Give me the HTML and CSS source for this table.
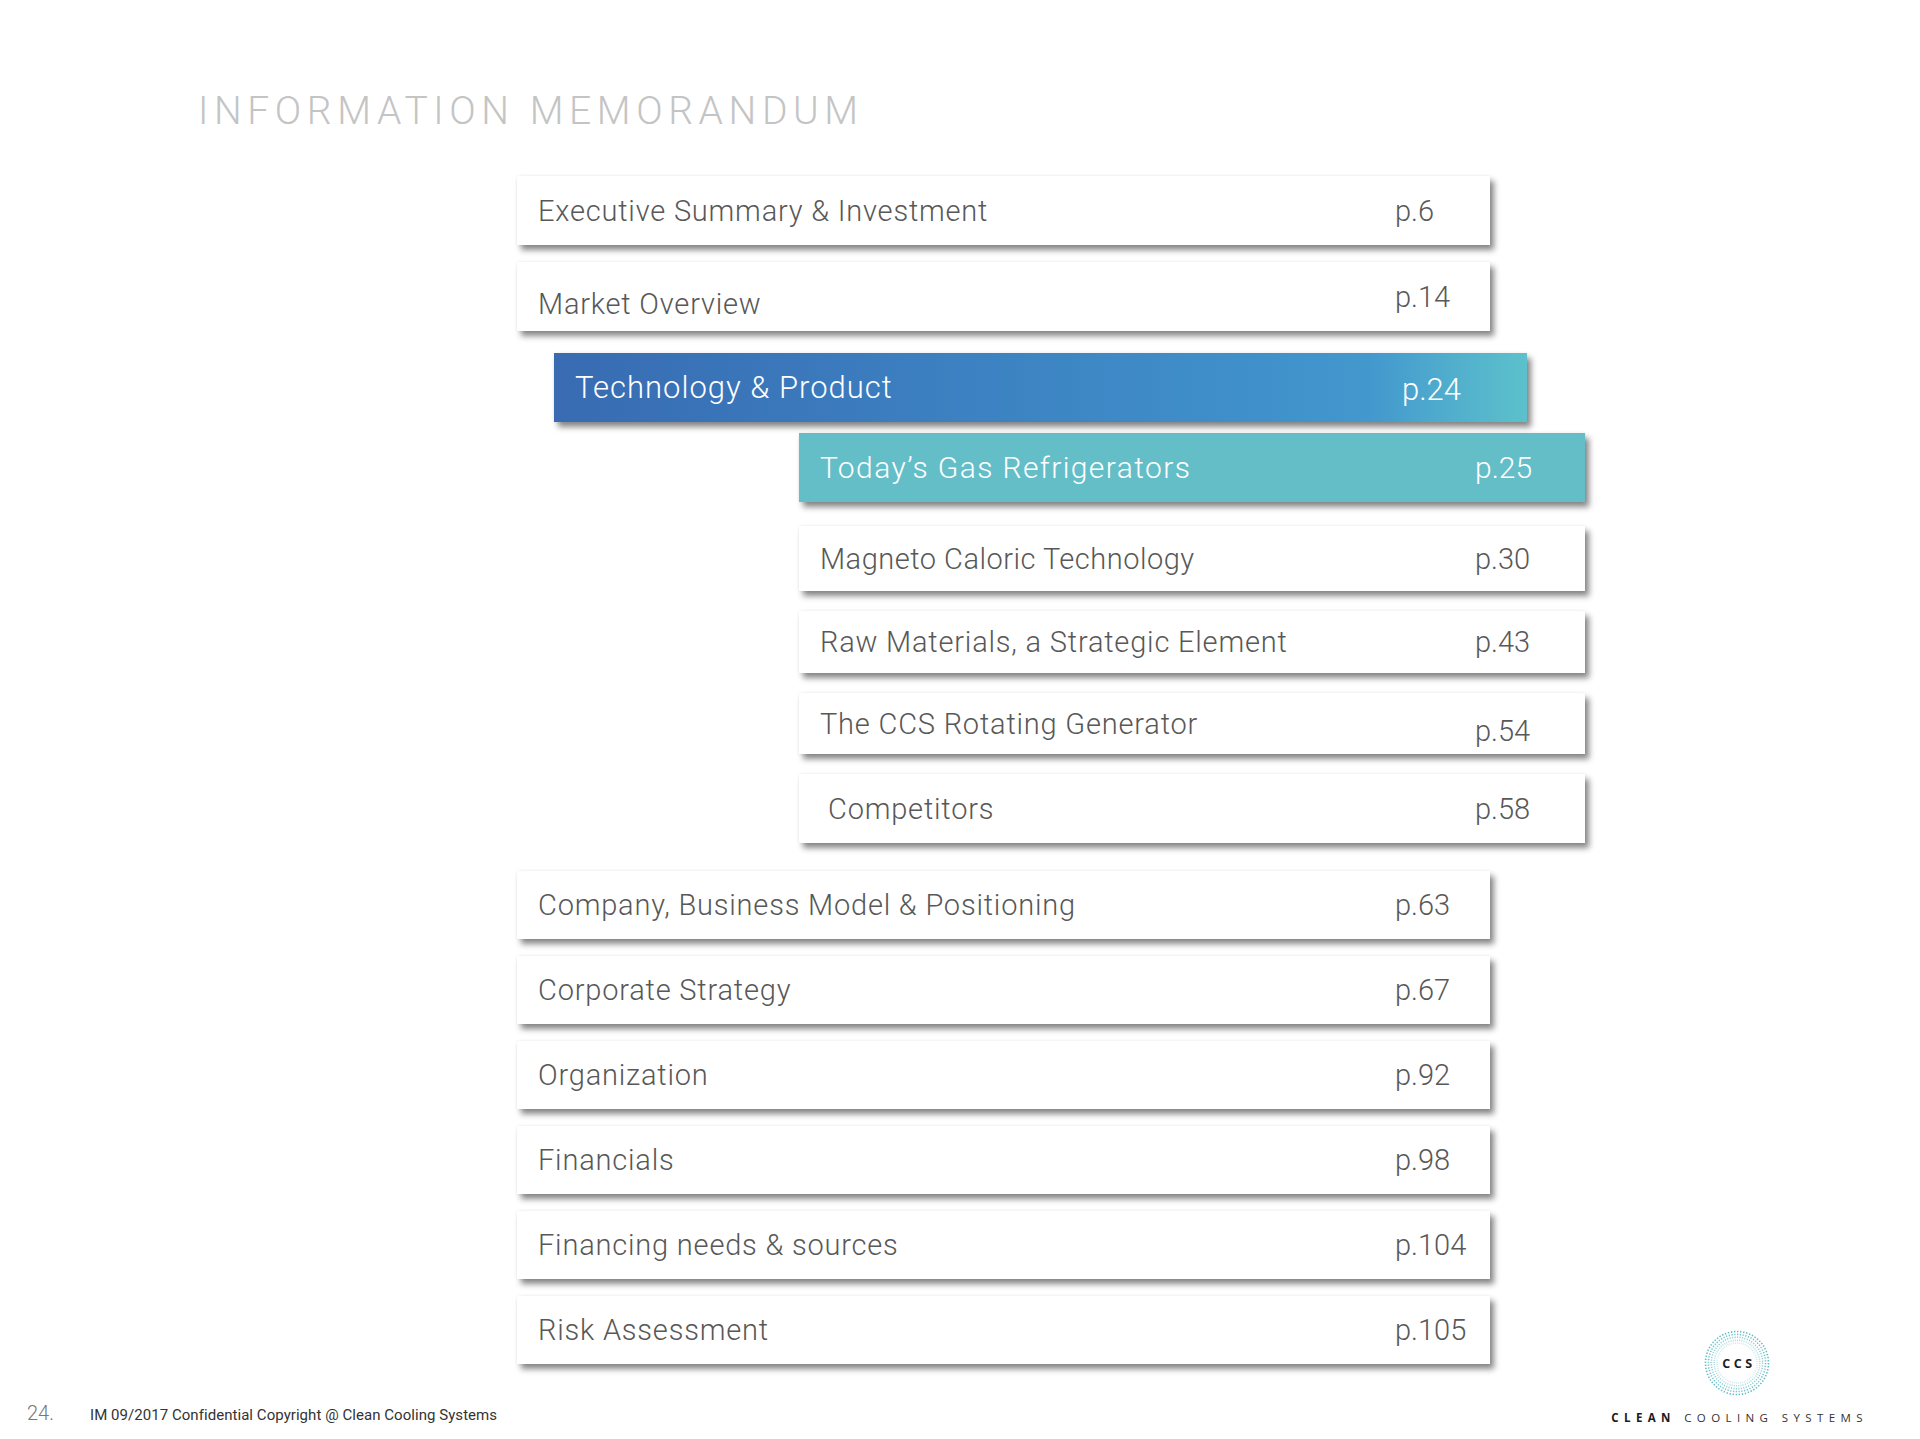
FILE: index.html
```html
<!DOCTYPE html>
<html lang="en">
<head>
<meta charset="utf-8">
<title>Information Memorandum</title>
<link rel="stylesheet" href="styles.css">
</head>
<body>
<div class="page">
  <h1 class="title">INFORMATION MEMORANDUM</h1>
  <div class="main">
    <div class="left">
      <div class="toc">
        <div class="row row--main row--tall"><span class="label">Executive Summary &amp; Investment</span><span class="num">p.6</span></div>
        <div class="row row--main row--tall"><span class="label label--low">Market Overview</span><span class="num">p.14</span></div>
        <div class="row row--tech"><span class="label">Technology &amp; Product</span><span class="num">p.24</span></div>
        <div class="sub">
          <div class="row row--sub row--today"><span class="label">Today’s Gas Refrigerators</span><span class="num">p.25</span></div>
          <div class="row row--sub row--mag"><span class="label">Magneto Caloric Technology</span><span class="num">p.30</span></div>
          <div class="row row--sub row--short"><span class="label">Raw Materials, a Strategic Element</span><span class="num">p.43</span></div>
          <div class="row row--sub row--shorter"><span class="label">The CCS Rotating Generator</span><span class="num num--low">p.54</span></div>
          <div class="row row--sub row--comp"><span class="label label--indent">Competitors</span><span class="num">p.58</span></div>
        </div>
        <div class="group">
          <div class="row row--main"><span class="label">Company, Business Model &amp; Positioning</span><span class="num">p.63</span></div>
          <div class="row row--main"><span class="label">Corporate Strategy</span><span class="num">p.67</span></div>
          <div class="row row--main"><span class="label">Organization</span><span class="num">p.92</span></div>
          <div class="row row--main"><span class="label">Financials</span><span class="num">p.98</span></div>
          <div class="row row--main"><span class="label">Financing needs &amp; sources</span><span class="num">p.104</span></div>
          <div class="row row--main row--risk"><span class="label">Risk Assessment</span><span class="num">p.105</span></div>
        </div>
      </div>
      <div class="footer">
        <span class="pageno">24.</span>
        <span class="copy">IM 09/2017 Confidential Copyright @ Clean Cooling Systems</span>
      </div>
    </div>
    <div class="brand">
      <svg class="brand-mark" width="66" height="66" viewBox="0 0 66 66" aria-hidden="true">
        <g fill="none" stroke-width="1.6" transform="rotate(-90 33 33)">
          <circle cx="33" cy="33" r="31.5" stroke="#62bcc5" pathLength="64" stroke-dasharray="0.45 0.55"/>
          <circle cx="33" cy="33" r="28.6" stroke="#74c4cc" pathLength="64" stroke-dasharray="0.45 0.55"/>
          <circle cx="33" cy="33" r="25.7" stroke="#8fcfd5" pathLength="64" stroke-dasharray="0.45 0.55"/>
          <circle cx="33" cy="33" r="22.8" stroke="#aedbdf" pathLength="64" stroke-dasharray="0.45 0.55"/>
          <circle cx="33" cy="33" r="20" stroke="#cde8ea" pathLength="64" stroke-dasharray="0.45 0.55"/>
        </g>
        <text x="35" y="37.5" text-anchor="middle" class="brand-ccs">CCS</text>
      </svg>
      <div class="brand-name"><b>CLEAN</b> COOLING SYSTEMS</div>
    </div>
  </div>
</div>
</body>
</html>
```

FILE: styles.css
```css
* { box-sizing: border-box; }

html, body {
  margin: 0;
  padding: 0;
  background: #ffffff;
}

body {
  font-family: Roboto, "Liberation Sans", sans-serif;
  color: #5a5a5a;
}

.page {
  width: 1920px;
  height: 1439px;
  overflow: hidden;
  display: flex;
  flex-direction: column;
}

.title {
  margin: 88px 0 0 198px;
  font-size: 39px;
  line-height: 46px;
  font-weight: 300;
  letter-spacing: 5.6px;
  color: #c4c4c4;
}

.main {
  display: flex;
  align-items: flex-end;
  justify-content: space-between;
  padding: 0 57px 0 27px;
}

.left {
  display: flex;
  flex-direction: column;
}

.toc {
  margin: 42px 0 0 490px;
  display: flex;
  flex-direction: column;
  gap: 17px;
}

.row {
  display: flex;
  align-items: center;
  height: 68px;
  padding-left: 21px;
  background: #ffffff;
  box-shadow: 4px 5px 6px rgba(0, 0, 0, 0.47), 0 0 3px rgba(0, 0, 0, 0.07);
  font-size: 29px;
  font-weight: 300;
  line-height: 34px;
  color: #585858;
}

.label {
  flex: 1;
  white-space: nowrap;
  letter-spacing: 0.8px;
}
.label--low { margin-top: 15px; }
.label--indent { padding-left: 8px; }

.num { white-space: nowrap; }
.num--low { margin-top: 15px; }

.row--main { width: 973px; }
.row--main .num { width: 95px; }
.row--tall { height: 69px; }

.row--tech {
  width: 973px;
  height: 69px;
  margin: 5px 0 0 37px;
  background: linear-gradient(90deg, #386bb2 0%, #3c7fc0 38%, #3f8fca 70%, #4398cd 84%, #4fabcd 91%, #5cc1cb 100%);
  color: #ffffff;
  font-size: 31px;
  font-weight: 300;
}
.row--tech .label { letter-spacing: 1px; }
.row--tech .num { width: 125px; padding-top: 4px; }

.sub {
  display: flex;
  flex-direction: column;
  gap: 20px;
  margin: -6px 0 0 282px;
}

.row--sub { width: 786px; }
.row--sub .num { width: 110px; }

.row--today {
  height: 69px;
  background: #64bec8;
  color: #ffffff;
  font-size: 30px;
  font-weight: 300;
}
.row--today .label { letter-spacing: 1.4px; }

.row--mag { height: 65px; margin-top: 4px; }
.row--mag .label { letter-spacing: 0.5px; }
.row--short { height: 62px; }
.row--shorter { height: 61px; }
.row--comp { height: 69px; }

.group {
  display: flex;
  flex-direction: column;
  gap: 17px;
  margin-top: 11px;
}

.footer {
  display: flex;
  align-items: baseline;
  margin-top: 38px;
  line-height: 22px;
}

.pageno {
  width: 63px;
  font-size: 20px;
  font-weight: 300;
  color: #777777;
}

.copy {
  font-size: 15px;
  font-weight: 400;
  color: #333333;
  letter-spacing: 0.05px;
}

.brand {
  display: flex;
  flex-direction: column;
  align-items: center;
  padding-bottom: 1px;
}

.brand-mark {
  display: block;
  margin: 0 0 15px 0;
}

.brand-ccs {
  font-family: "Open Sans", Roboto, sans-serif;
  font-size: 12.5px;
  font-weight: 700;
  letter-spacing: 3.6px;
  fill: #1e1e1e;
}

.brand-name {
  font-family: "Open Sans", Roboto, sans-serif;
  font-size: 11.5px;
  line-height: 14px;
  letter-spacing: 5.4px;
  color: #333333;
  white-space: nowrap;
  margin-right: -5px;
}

.brand-name b {
  font-weight: 700;
  color: #1a1a1a;
}
```
